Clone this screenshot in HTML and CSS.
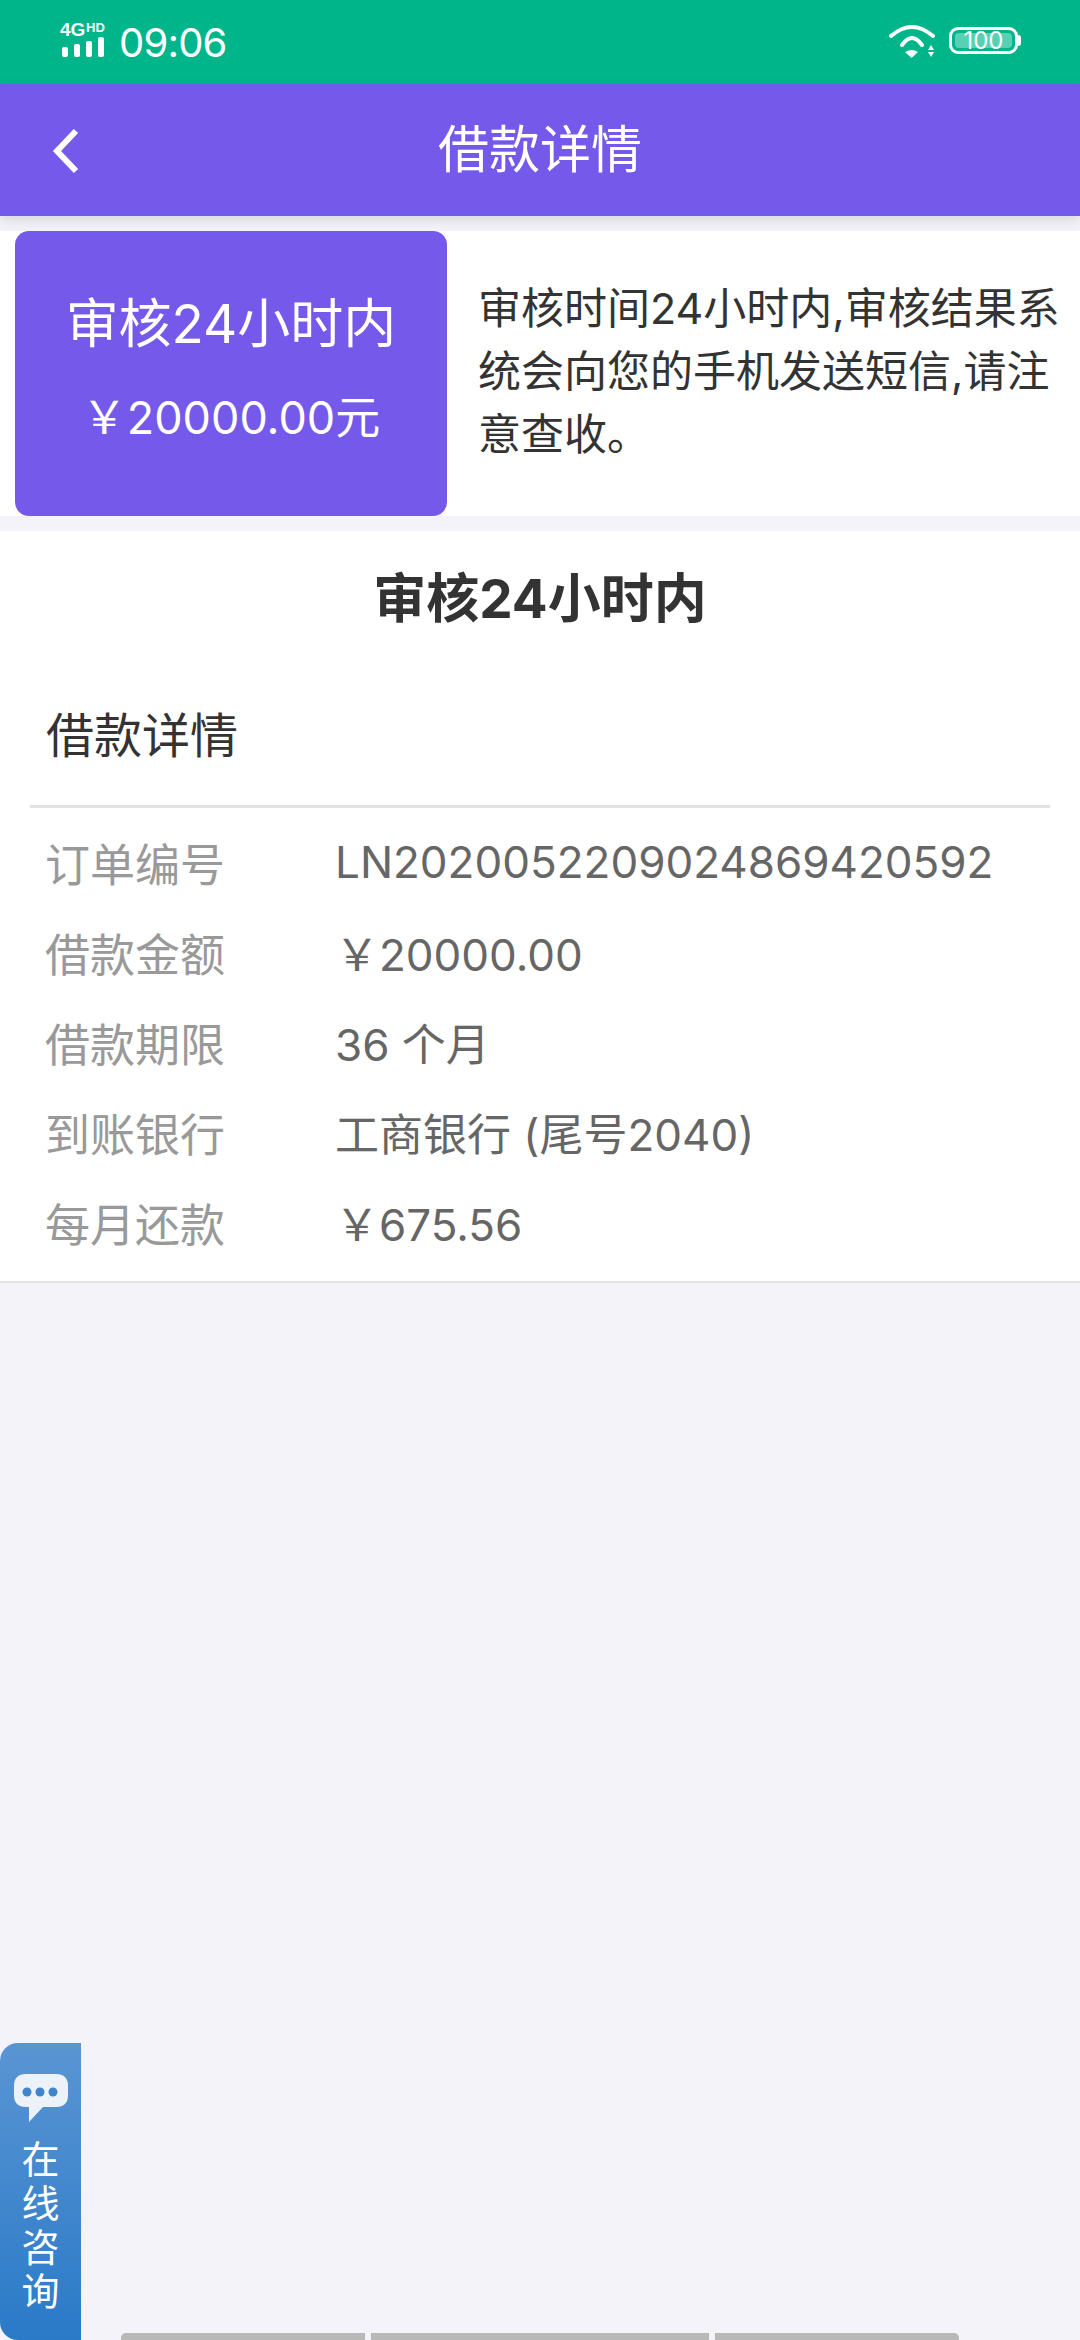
FILE: index.html
```html
<!DOCTYPE html>
<html lang="zh-CN">
<head>
<meta charset="utf-8">
<title>借款详情</title>
<link rel="stylesheet" href="styles.css">
</head>
<body>
<div class="status">
  <div class="status-left">
    <svg class="sig" width="46" height="44" viewBox="0 0 46 44">
      <text x="0" y="20" class="sig-4g">4G</text>
      <text x="26" y="16" class="sig-hd">HD</text>
      <rect x="2" y="31" width="6" height="10" rx="2" fill="#fff"/>
      <rect x="14" y="28" width="6" height="13" rx="2" fill="#fff"/>
      <rect x="26" y="25" width="6" height="16" rx="2" fill="#fff"/>
      <rect x="38" y="21" width="6" height="20" rx="2" fill="#fff"/>
    </svg>
    <span class="time">09:06</span>
  </div>
  <div class="status-right">
    <svg width="48" height="36" viewBox="0 0 48 36" fill="none">
      <path d="M2 14Q23 -4 44 14" stroke="#fff" stroke-width="4" stroke-linecap="round"/>
      <path d="M13 23Q23 9 33 23" stroke="#fff" stroke-width="4" stroke-linecap="round"/>
      <path d="M16 30Q22.5 26 29 30L22.5 36Z" fill="#fff"/>
      <path d="M42 23L45 28H39Z M39 30H45L42 35Z" fill="#fff"/>
    </svg>
    <div class="battery"><span class="battery-fill">100</span></div>
    <span class="battery-tip"></span>
  </div>
</div>
<header class="nav">
  <svg class="back" width="28" height="46" viewBox="0 0 28 46" fill="none"><path d="M25 3L6 23L25 43" stroke="#fff" stroke-width="6"/></svg>
  <h1 class="nav-title">借款详情</h1>
</header>
<section class="summary">
  <div class="summary-card">
    <div class="summary-status">审核24小时内</div>
    <div class="summary-amount">￥20000.00元</div>
  </div>
  <p class="summary-text">审核时间24小时内,审核结果系统会向您的手机发送短信,请注意查收。</p>
</section>
<section class="detail">
  <h2 class="detail-status">审核24小时内</h2>
  <div class="detail-heading">借款详情</div>
  <dl class="rows">
    <div class="row"><dt>订单编号</dt><dd>LN2020052209024869420592</dd></div>
    <div class="row"><dt>借款金额</dt><dd>￥20000.00</dd></div>
    <div class="row"><dt>借款期限</dt><dd>36 个月</dd></div>
    <div class="row"><dt>到账银行</dt><dd>工商银行 (尾号2040)</dd></div>
    <div class="row"><dt>每月还款</dt><dd>￥675.56</dd></div>
  </dl>
</section>
<aside class="consult">
  <svg width="56" height="50" viewBox="0 0 56 50"><path d="M13 1H43C51 1 55 5 55 13V22C55 30 51 34 43 34H30L16 49V34H13C5 34 1 30 1 22V13C1 5 5 1 13 1Z" fill="#edf2f9"/><circle cx="14" cy="19" r="4.5" fill="#3f85cb"/><circle cx="27" cy="19" r="4.5" fill="#3f85cb"/><circle cx="40" cy="19" r="4.5" fill="#3f85cb"/></svg>
  <span class="consult-text">在线咨询</span>
</aside>
<div class="handle"><span class="h1"></span><span class="h2"></span><span class="h3"></span></div>
</body>
</html>
```
FILE: styles.css
```css
* { box-sizing: border-box; }
html, body { margin: 0; padding: 0; }
body { width: 1080px; height: 2340px; background: #f3f3f9; font-family: Inter, "Noto Sans CJK SC", sans-serif; overflow: hidden; position: relative; color: #333; }
.status { height: 84px; background: #00b58a; display: flex; justify-content: space-between; align-items: center; padding: 0 59px 0 60px; color: #fff; }
.status-left { display: flex; align-items: center; gap: 13px; }
.sig { margin-top: -8px; }
.sig-4g { font: 700 19px "Liberation Sans", sans-serif; fill: #fff; }
.sig-hd { font: 700 13px "Liberation Sans", sans-serif; fill: #fff; }
.time { font: 400 40px Inter, sans-serif; letter-spacing: -0.8px; }
.status-right { display: flex; align-items: center; margin-top: -4px; }
.battery { width: 69px; height: 27px; border: 3px solid #fff; border-radius: 9px; padding: 3px; margin-left: 12px; }
.battery-fill { display: block; height: 15px; background: rgba(255,255,255,.35); border-radius: 4px; font: 400 24px/15px Inter, sans-serif; text-align: center; color: #fff; }
.battery-tip { width: 3px; height: 11px; background: #fff; border-radius: 0 3px 3px 0; }
.nav { height: 132px; background: #7459ea; display: flex; align-items: center; justify-content: center; position: relative; box-shadow: 0 4px 12px rgba(0,0,0,.12); }
.back { position: absolute; left: 51px; top: 44px; }
.nav-title { margin: 0 0 8px; font: 400 51px "Noto Sans CJK SC", sans-serif; color: #fff; }
.summary { margin-top: 15px; height: 285px; background: #fff; display: flex; }
.summary-card { width: 432px; margin-left: 15px; padding-top: 60px; background: #7459ea; border-radius: 14px; color: #fff; display: flex; flex-direction: column; align-items: center; }
.summary-status { font-size: 53px; line-height: 66px; }
.summary-amount { font-size: 45px; line-height: 60px; margin-top: 31px; }
.summary-text { margin: 0; padding: 46px 15px 0 31px; flex: 1; font-size: 43px; line-height: 63px; color: #333; }
.detail { margin-top: 15px; background: #fff; height: 752px; border-bottom: 2px solid #e2e2e2; }
.detail-status { margin: 0; padding-top: 34px; text-align: center; font-size: 53px; line-height: 68px; font-weight: 700; color: #333; }
.detail-heading { margin: 0 30px; height: 175px; padding: 73px 16px 0; font-size: 48px; line-height: 60px; border-bottom: 3px solid #e2e2e2; color: #333; }
.rows { margin: 9px 0 0; padding: 0 45px; }
.row { display: flex; height: 90px; align-items: center; }
.row dt { width: 290px; font-size: 45px; color: #999; }
.row dd { margin: 0; font-size: 44px; color: #666; white-space: nowrap; }
.consult { position: absolute; left: 0; top: 2043px; width: 81px; height: 297px; border-radius: 18px 0 0 18px; background: linear-gradient(#5a95d3, #2a7ac8); display: flex; flex-direction: column; align-items: center; padding-top: 30px; color: #fff; }
.consult-text { width: 38px; font-size: 38px; line-height: 44px; margin-top: 14px; text-align: center; }
.handle { position: absolute; left: 121px; bottom: 0; height: 7px; display: flex; gap: 6px; }
.handle span { background: #b8b8b8; height: 7px; }
.h1 { width: 244px; border-radius: 5px 0 0 0; }
.h2 { width: 338px; }
.h3 { width: 244px; border-radius: 0 5px 0 0; }
```
